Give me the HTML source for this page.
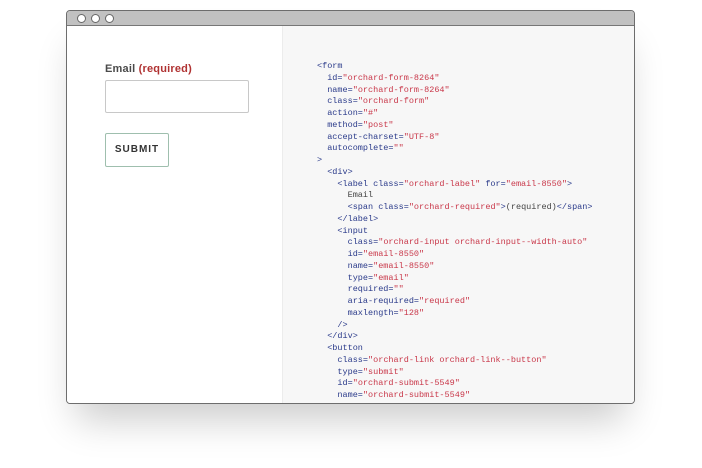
<!DOCTYPE html>
<html><head><style>
html,body{margin:0;padding:0;background:#fff;width:702px;height:468px;overflow:hidden;position:relative}
.win{position:absolute;left:66px;top:10px;width:567px;height:392px;border:1px solid #6d6d6d;border-radius:4px;background:#fff;overflow:hidden;box-shadow:0 26px 36px -10px rgba(0,0,0,0.2)}
.bar{position:absolute;left:0;top:0;width:100%;height:14px;background:#c1c1c1;border-bottom:1px solid #777}
.dot{position:absolute;top:3px;width:7px;height:7px;border:1px solid #666;border-radius:50%;background:#fff}
.left{position:absolute;left:0;top:15px;width:215px;bottom:0;background:#fff;border-right:1px solid #ececec}
.right{position:absolute;left:216px;top:15px;right:0;bottom:0;background:#f7f7f7}
.lbl{position:absolute;left:38px;top:37px;font:bold 11px "Liberation Sans",sans-serif;color:#4a4a4a;letter-spacing:.2px}
.lbl span{color:#b03232}
.inp{position:absolute;left:38px;top:54px;width:142px;height:31px;border:1px solid #c8c8c8;border-radius:2px}
.btn{position:absolute;left:38px;top:107px;width:62px;height:32px;border:1px solid #9fbfae;border-radius:2px;font:bold 10px "Liberation Sans",sans-serif;letter-spacing:1px;color:#333;text-align:center;line-height:32px}
pre{position:absolute;left:34px;top:35px;margin:0;font:8.5px/11.75px "Liberation Mono",monospace;color:#2a3a8a}
.s{color:#c9384a}.t{color:#444}
</style></head><body>
<div class="win">
<div class="bar"><div class="dot" style="left:10px"></div><div class="dot" style="left:24px"></div><div class="dot" style="left:38px"></div></div>
<div class="left">
<div class="lbl">Email <span>(required)</span></div>
<div class="inp"></div>
<div class="btn">SUBMIT</div>
</div>
<div class="right"><pre>&lt;form
  id=<span class="s">"orchard-form-8264"</span>
  name=<span class="s">"orchard-form-8264"</span>
  class=<span class="s">"orchard-form"</span>
  action=<span class="s">"#"</span>
  method=<span class="s">"post"</span>
  accept-charset=<span class="s">"UTF-8"</span>
  autocomplete=<span class="s">""</span>
&gt;
  &lt;div&gt;
    &lt;label class=<span class="s">"orchard-label"</span> for=<span class="s">"email-8550"</span>&gt;
<span class="t">      Email</span>
      &lt;span class=<span class="s">"orchard-required"</span>&gt;<span class="t">(required)</span>&lt;/span&gt;
    &lt;/label&gt;
    &lt;input
      class=<span class="s">"orchard-input orchard-input--width-auto"</span>
      id=<span class="s">"email-8550"</span>
      name=<span class="s">"email-8550"</span>
      type=<span class="s">"email"</span>
      required=<span class="s">""</span>
      aria-required=<span class="s">"required"</span>
      maxlength=<span class="s">"128"</span>
    /&gt;
  &lt;/div&gt;
  &lt;button
    class=<span class="s">"orchard-link orchard-link--button"</span>
    type=<span class="s">"submit"</span>
    id=<span class="s">"orchard-submit-5549"</span>
    name=<span class="s">"orchard-submit-5549"</span></pre></div>
</div>
</body></html>
